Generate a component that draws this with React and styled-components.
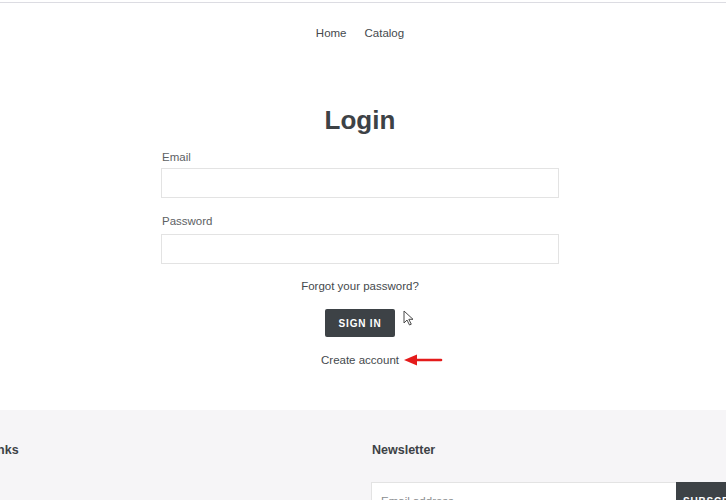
import React from 'react';
import styled, { createGlobalStyle } from 'styled-components';

const GlobalStyle = createGlobalStyle`
    html, body {
        margin: 0;
        padding: 0;
        background: #ffffff;
        overflow: hidden;
    }
    body {
        font-family: "Liberation Sans", Arial, sans-serif;
        color: #3d4246;
    }
    * {
        box-sizing: border-box;
    }
`;

function Cursor() {
    return (
        <CursorStyled width="11" height="16" viewBox="0 0 11 16">
            <path d="M1 1 L1 13 L4 10 L6.5 15 L8.3 14.2 L5.8 9.3 L10 9.3 Z"
                fill="#ffffff" stroke="#4a4a4a" strokeWidth="1" strokeLinejoin="round" />
        </CursorStyled>
    );
}

function RedArrow() {
    return (
        <ArrowStyled width="40" height="14" viewBox="0 0 40 14">
            <path d="M12 7 L38 7" stroke="#e41b1b" strokeWidth="2.6" strokeLinecap="round" />
            <path d="M1 7 L14 1.5 L14 12.5 Z" fill="#e41b1b" />
        </ArrowStyled>
    );
}

function App() {
    return (
        <>
            <GlobalStyle />
            <TopRule />
            <Page>
                <Nav>
                    <NavLink href="#">Home</NavLink>
                    <NavLink href="#">Catalog</NavLink>
                </Nav>

                <LoginForm>
                    <Title>Login</Title>
                    <Label>Email</Label>
                    <TextInput type="email" />
                    <Label $gap={15}>Password</Label>
                    <TextInput type="password" $gap={5} />

                    <CenterLink href="#" $gap={14}>Forgot your password?</CenterLink>

                    <ButtonRow>
                        <SignInButton>Sign In</SignInButton>
                        <Cursor />
                    </ButtonRow>

                    <AnnotatedRow>
                        <CenterLink href="#">Create account</CenterLink>
                        <RedArrow />
                    </AnnotatedRow>
                </LoginForm>
            </Page>

            <Footer>
                <FooterInner>
                    <FooterColumn>
                        <FooterHeading>Links</FooterHeading>
                    </FooterColumn>
                    <FooterColumn>
                        <FooterHeading>Newsletter</FooterHeading>
                        <NewsletterForm>
                            <NewsletterInput placeholder="Email address" />
                            <SubscribeButton>Subscribe</SubscribeButton>
                        </NewsletterForm>
                    </FooterColumn>
                </FooterInner>
            </Footer>
        </>
    );
}

const TopRule = styled.div`
    margin-top: 2px;
    height: 1px;
    background: #dcdce2;
`;

const Page = styled.div`
    width: 720px;
`;

const Nav = styled.nav`
    display: flex;
    justify-content: center;
    gap: 18px;
    padding-top: 22px;
`;

const NavLink = styled.a`
    font-size: 11.5px;
    line-height: 16px;
    color: #45494d;
    text-decoration: none;
`;

const LoginForm = styled.div`
    width: 398px;
    margin: 62px auto 0;
    display: flex;
    flex-direction: column;
`;

const Title = styled.h1`
    margin: 0;
    text-align: center;
    font-size: 26px;
    line-height: 34px;
    font-weight: bold;
    color: #3d4246;
`;

const Label = styled.label`
    margin-top: ${p => p.$gap ?? 12}px;
    padding-left: 1px;
    font-size: 11.5px;
    line-height: 16px;
    color: #5d6164;
`;

const TextInput = styled.input`
    margin-top: ${p => p.$gap ?? 3}px;
    height: 30px;
    width: 100%;
    border: 1px solid #e3e3e3;
    background: #ffffff;
    outline: none;
`;

const CenterLink = styled.a`
    margin-top: ${p => p.$gap ?? 0}px;
    align-self: center;
    font-size: 11.5px;
    line-height: 16px;
    color: #45494d;
    text-decoration: none;
`;

const ButtonRow = styled.div`
    position: relative;
    align-self: center;
    margin-top: 15px;
`;

const SignInButton = styled.button`
    display: block;
    width: 70px;
    height: 28px;
    border: none;
    border-radius: 2px;
    background: #3d4246;
    color: #ffffff;
    font-family: "Liberation Sans", Arial, sans-serif;
    font-size: 10px;
    font-weight: bold;
    letter-spacing: 0.8px;
    text-transform: uppercase;
`;

const CursorStyled = styled.svg`
    position: absolute;
    left: 78px;
    top: 1px;
`;

const AnnotatedRow = styled.div`
    position: relative;
    align-self: center;
    margin-top: 15px;
    display: flex;
`;

const ArrowStyled = styled.svg`
    position: absolute;
    left: 82px;
    top: 1px;
`;

const Footer = styled.footer`
    margin-top: 42px;
    background: #f6f5f7;
    padding-top: 32px;
    height: 120px;
`;

const FooterInner = styled.div`
    width: 744px;
    margin-left: -14px;
    display: grid;
    grid-template-columns: 362px 362px;
    column-gap: 24px;
`;

const FooterColumn = styled.div`
    display: flex;
    flex-direction: column;
    min-width: 0;
`;

const FooterHeading = styled.h4`
    margin: 0;
    font-size: 12.5px;
    line-height: 16px;
    font-weight: bold;
    color: #3d4246;
`;

const NewsletterForm = styled.div`
    display: flex;
    margin-top: 24px;
    margin-left: -1px;
`;

const NewsletterInput = styled.input`
    flex: none;
    width: 305px;
    height: 38px;
    padding: 0 9px;
    border: 1px solid #e3e3e3;
    border-right: none;
    background: #ffffff;
    font-family: "Liberation Sans", Arial, sans-serif;
    font-size: 11.5px;
    outline: none;

    &::placeholder {
        color: #8a8d8f;
    }
`;

const SubscribeButton = styled.button`
    flex: none;
    width: 110px;
    height: 38px;
    padding: 0 7px;
    border: none;
    background: #3d4246;
    color: #ffffff;
    font-family: "Liberation Sans", Arial, sans-serif;
    font-size: 10px;
    font-weight: bold;
    letter-spacing: 0.8px;
    text-transform: uppercase;
    text-align: left;
`;

export default App;
